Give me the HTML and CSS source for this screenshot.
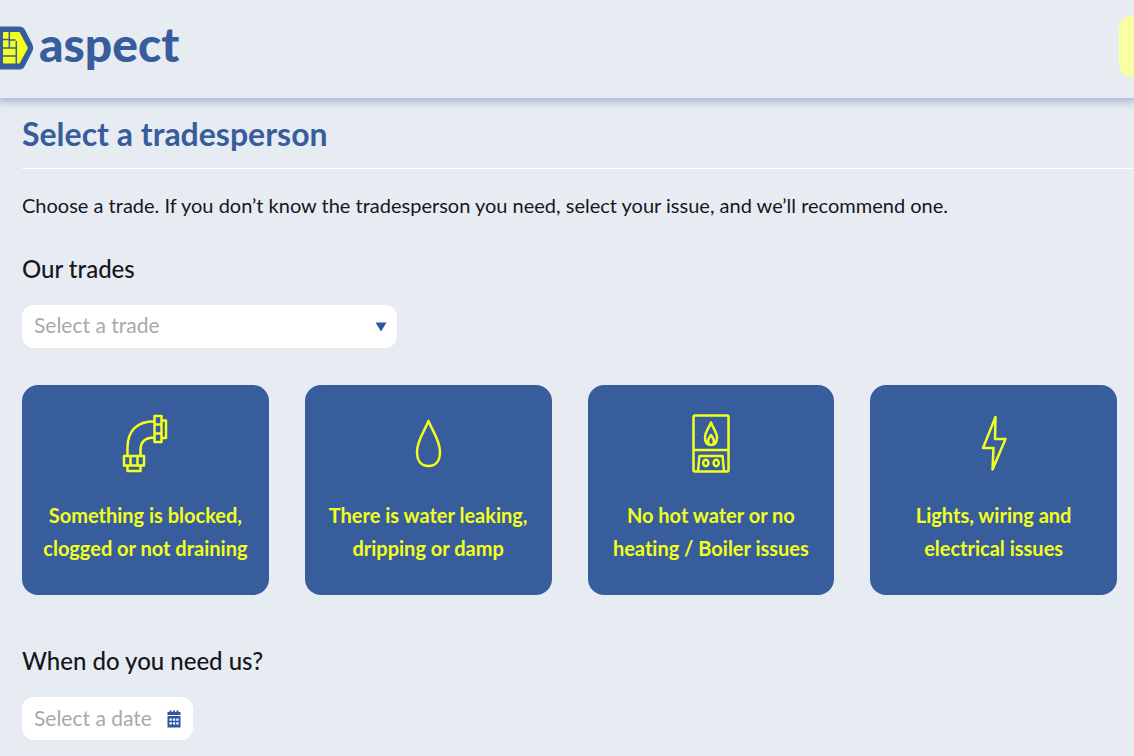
FILE: index.html
```html
<!DOCTYPE html>
<html lang="en">
<head>
<meta charset="utf-8">
<meta name="viewport" content="width=device-width, initial-scale=1">
<title>Select a tradesperson</title>
<link rel="stylesheet" href="styles.css">
</head>
<body>
<header class="site-header">
  <a class="logo" href="#">
    <svg class="logo-mark" viewBox="0 0 34 44" aria-hidden="true">
      <path fill="#385d9c" d="M0 0.500H20Q23 .5 24.500 3L32.500 18.500Q34 22 32.500 25L24.500 40.500Q23 43.500 20 43.500H0Z"/>
      <path fill="#f3ff1c" d="M4 6H19.500L28 22L19.500 37.500H4Q3 37.500 3 36.500V7Q3 6 4 6Z"/>
      <path fill="none" stroke="#385d9c" stroke-width="1.500" d="M9.300 6V22M3 13.500H9.300M9.300 14H15.500M3 22H16M3 30H16M16.300 15V38"/>
    </svg>
    <span class="logo-word">aspect</span>
  </a>
  <button class="header-action" type="button"></button>
</header>
<main class="booking">
  <h1 class="title">Select a tradesperson</h1>
  <p class="intro">Choose a trade. If you don’t know the tradesperson you need, select your issue, and we’ll recommend one.</p>
  <label class="label" for="trade">Our trades</label>
  <div class="field field-trade">
    <select class="control" id="trade"><option>Select a trade</option></select>
    <svg class="arrow" viewBox="0 0 12 10" aria-hidden="true"><path fill="#2f579f" d="M.5.5h11L6 9.500z"/></svg>
  </div>
  <div class="issues">
    <button class="issue" type="button">
      <svg class="icon" viewBox="0 0 60 60" aria-hidden="true">
        <path d="M12.500 41V34C12.500 17 22 7.200 39.500 7.200M25.500 41V36C25.500 28 30 23.500 39.500 23.500M39.500 2h7v26h-7zM39.500 10.500h7M39.500 19.500h7M46.500 6.500H51v17.500h-4.500M9 42h20v9.500H9zM15.500 42v9.500M22.500 42v9.500M12.500 51.500V57h13v-5.500"/>
      </svg>
      <span>Something is blocked,<br>clogged or not draining</span>
    </button>
    <button class="issue" type="button">
      <svg class="icon" viewBox="0 0 60 60" aria-hidden="true">
        <path d="M30.500 7C27.500 15 19 26 19 38C19 47 23.500 52 30.500 52S42 47 42 38C42 26 33.500 15 30.500 7Z"/>
      </svg>
      <span>There is water leaking,<br>dripping or damp</span>
    </button>
    <button class="issue" type="button">
      <svg class="icon" viewBox="0 0 60 60" aria-hidden="true">
        <rect x="12.500" y="1.500" width="35" height="56" rx="1.500"/>
        <path d="M12.500 36h35M17 57l1.500-15h23L43 57M30 8.500C28 14 24 18 24 23.500S26.500 31 30 31S36 28.500 36 23.500S32 14 30 8.500ZM30 21c-1.500 2-3 4-3 6.500s1.500 3.500 3 3.500s3-1 3-3.500S31.500 23 30 21Z"/>
        <ellipse cx="24.800" cy="49" rx="2.600" ry="3.200"/><ellipse cx="35.200" cy="49" rx="2.600" ry="3.200"/>
      </svg>
      <span>No hot water or no<br>heating / Boiler issues</span>
    </button>
    <button class="issue" type="button">
      <svg class="icon" viewBox="0 0 60 60" aria-hidden="true">
        <path d="M31.500 3L19 34H29.500L28.500 55.500L41.500 25H31Z"/>
      </svg>
      <span>Lights, wiring and<br>electrical issues</span>
    </button>
  </div>
  <label class="label" for="date">When do you need us?</label>
  <div class="field field-date">
    <input class="control" id="date" type="text" placeholder="Select a date">
    <svg class="calendar" viewBox="0 0 14 18" aria-hidden="true">
      <path fill="#2f579f" d="M.5 2h2V.5H4.500V2h1.500V.5h2V2h1.500V.5h2V2h2v3H.5zM.5 6h13v11.500H.5z"/>
      <path fill="#fff" d="M2.500 8.500h2.300v2.300H2.500zM5.900 8.500h2.300v2.300H5.900zM9.300 8.500h2.300v2.300H9.300zM2.500 12.300h2.300v2.300H2.500zM5.900 12.300h2.300v2.300H5.900zM9.300 12.300h2.300v2.300H9.300z"/>
    </svg>
  </div>
</main>
</body>
</html>
```
FILE: styles.css
```css
* { box-sizing: border-box; }
body {
  margin: 0;
  background: #e7ecf3;
  color: #15171c;
  font-family: Lato, "Liberation Sans", sans-serif;
  font-size: 20px;
  font-variant-ligatures: none;
  line-height: 32px;
}
.site-header {
  display: flex;
  justify-content: space-between;
  align-items: flex-start;
  height: 98px;
  padding-top: 16px;
  overflow-x: clip;
  box-shadow: 0 2px 8px 2px #a3b6d2;
}
.logo {
  display: flex;
  align-items: center;
  gap: 5px;
  padding-top: 8px;
  color: #385d9c;
  text-decoration: none;
}
.logo-mark { width: 34px; height: 44px; }
.logo-word { font-size: 48px; font-weight: 900; line-height: 40px; padding-bottom: 8px; }
.header-action {
  width: 160px;
  height: 61px;
  margin-right: -145px;
  border: 0;
  border-radius: 12px;
  background: #f9ffa3;
}
.booking { padding: 16px 17px 16px 22px; }
.title {
  margin: 0 -17px 20px 0;
  padding-bottom: 14px;
  border-bottom: 1px solid #fff;
  color: #385d9c;
  font-size: 32px;
  font-weight: 700;
  line-height: 40px;
}
.intro { margin: 0 0 32px; }
.label { display: block; margin-bottom: 20px; font-size: 24px; font-weight: 500; }
.field { position: relative; }
.field-trade { width: 375px; max-width: 100%; margin-bottom: 37px; }
.field-date { width: 171px; }
.control {
  display: block;
  appearance: none;
  width: 100%;
  height: 43px;
  padding: 0 12px 3px;
  border: 0;
  border-radius: 12px;
  background: #fff;
  color: #a9a9a9;
  font: inherit;
  font-size: 21px;
}
.control::placeholder { color: #a9a9a9; opacity: 1; }
.arrow, .calendar { position: absolute; top: 0; bottom: 0; margin: auto; pointer-events: none; }
.arrow { right: 10px; width: 12px; height: 10px; }
.calendar { right: 12px; width: 14px; height: 18px; }
.issues {
  display: grid;
  grid-template-columns: repeat(4, 1fr);
  gap: 36px;
  margin-bottom: 50px;
}
.issue {
  display: flex;
  flex-direction: column;
  align-items: center;
  gap: 25px;
  min-height: 210px;
  padding: 29px 8px 28px;
  border: 0;
  border-radius: 16px;
  background: #385d9c;
  color: #f3ff1c;
  font: inherit;
  font-variant-ligatures: none;
  font-weight: 700;
  line-height: 33px;
  white-space: nowrap;
}
.icon {
  width: 60px;
  height: 60px;
  fill: none;
  stroke: #f3ff1c;
  stroke-width: 2.500;
  stroke-linejoin: round;
}
```
